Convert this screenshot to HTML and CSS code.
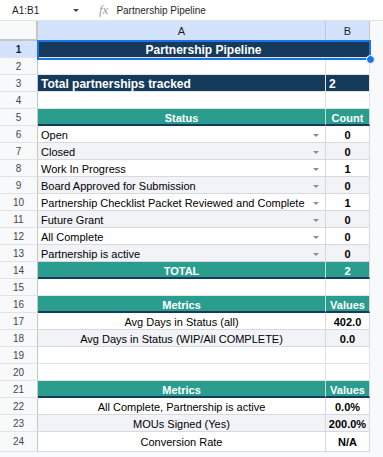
FILE: index.html
```html
<!DOCTYPE html>
<html lang="en">
<head>
    <meta charset="UTF-8">
    <title>Partnership Pipeline</title>
    <link rel="stylesheet" href="styles.css">
</head>
<body>
    <div class="topbar">
        <span class="namebox">A1:B1</span>
        <span class="caret"></span>
        <span class="fx">fx</span>
        <span class="formula">Partnership Pipeline</span>
    </div>

    <div class="sheet">
        <div class="row colhead">
            <div class="corner"></div>
            <div class="ch">A</div>
            <div class="ch">B</div>
        </div>

        <div class="row">
            <div class="rh active">1</div>
            <div class="c title">Partnership Pipeline</div>
        </div>
        <div class="row">
            <div class="rh">2</div>
            <div class="c"></div><div class="c"></div>
        </div>
        <div class="row navy">
            <div class="rh">3</div>
            <div class="c">Total partnerships tracked</div>
            <div class="c">2</div>
        </div>
        <div class="row">
            <div class="rh">4</div>
            <div class="c"></div><div class="c"></div>
        </div>

        <!-- status table -->
        <div class="row head">
            <div class="rh">5</div>
            <div class="c">Status</div>
            <div class="c">Count</div>
        </div>
        <div class="row item">
            <div class="rh">6</div>
            <div class="c">Open<span class="dd"></span></div>
            <div class="c val">0</div>
        </div>
        <div class="row item alt">
            <div class="rh">7</div>
            <div class="c">Closed<span class="dd"></span></div>
            <div class="c val">0</div>
        </div>
        <div class="row item">
            <div class="rh">8</div>
            <div class="c">Work In Progress<span class="dd"></span></div>
            <div class="c val">1</div>
        </div>
        <div class="row item alt">
            <div class="rh">9</div>
            <div class="c">Board Approved for Submission<span class="dd"></span></div>
            <div class="c val">0</div>
        </div>
        <div class="row item">
            <div class="rh">10</div>
            <div class="c">Partnership Checklist Packet Reviewed and Complete<span class="dd"></span></div>
            <div class="c val">1</div>
        </div>
        <div class="row item alt">
            <div class="rh">11</div>
            <div class="c">Future Grant<span class="dd"></span></div>
            <div class="c val">0</div>
        </div>
        <div class="row item">
            <div class="rh">12</div>
            <div class="c">All Complete<span class="dd"></span></div>
            <div class="c val">0</div>
        </div>
        <div class="row item alt">
            <div class="rh">13</div>
            <div class="c">Partnership is active<span class="dd"></span></div>
            <div class="c val">0</div>
        </div>
        <div class="row head">
            <div class="rh">14</div>
            <div class="c">TOTAL</div>
            <div class="c">2</div>
        </div>
        <div class="row">
            <div class="rh">15</div>
            <div class="c"></div><div class="c"></div>
        </div>

        <!-- metrics 1 -->
        <div class="row head">
            <div class="rh">16</div>
            <div class="c">Metrics</div>
            <div class="c">Values</div>
        </div>
        <div class="row item metric">
            <div class="rh">17</div>
            <div class="c">Avg Days in Status (all)</div>
            <div class="c val">402.0</div>
        </div>
        <div class="row item metric alt">
            <div class="rh">18</div>
            <div class="c">Avg Days in Status (WIP/All COMPLETE)</div>
            <div class="c val">0.0</div>
        </div>
        <div class="row">
            <div class="rh">19</div>
            <div class="c"></div><div class="c"></div>
        </div>
        <div class="row">
            <div class="rh">20</div>
            <div class="c"></div><div class="c"></div>
        </div>

        <!-- metrics 2 -->
        <div class="row head">
            <div class="rh">21</div>
            <div class="c">Metrics</div>
            <div class="c">Values</div>
        </div>
        <div class="row item metric">
            <div class="rh">22</div>
            <div class="c">All Complete, Partnership is active</div>
            <div class="c val">0.0%</div>
        </div>
        <div class="row item metric alt">
            <div class="rh">23</div>
            <div class="c">MOUs Signed (Yes)</div>
            <div class="c val">200.0%</div>
        </div>
        <div class="row item metric last">
            <div class="rh">24</div>
            <div class="c">Conversion Rate</div>
            <div class="c val">N/A</div>
        </div>

        <div class="selection"><span class="handle"></span></div>
    </div>
</body>
</html>
```

FILE: styles.css
```css
:root {
    --navy: #163a5c;
    --teal: #2a9d8f;
    --alt: #f1f3f7;
    --grid: #e2e3e3;
    --table-line: #d6dae0;
    --header-bg: #f8f9fa;
    --selected: #d3e3fd;
    --blue: #1a73e8;
}

* {
    margin: 0;
    padding: 0;
    box-sizing: border-box;
}

body {
    font-family: "Liberation Sans", Arial, sans-serif;
    background: var(--header-bg);
    color: #000;
    width: 383px;
    height: 457px;
    overflow: hidden;
}

.topbar {
    height: 21px;
    background: #fff;
    border-bottom: 1px solid #e1e3e1;
    display: flex;
    align-items: center;
    font-size: 10px;
    color: #1f1f1f;
}

.namebox {
    margin-left: 12px;
    width: 61px;
}

.caret {
    width: 0;
    height: 0;
    border-left: 3px solid transparent;
    border-right: 3px solid transparent;
    border-top: 3px solid #444746;
}

.fx {
    margin-left: 20px;
    font-family: "Liberation Serif", serif;
    font-style: italic;
    font-size: 13px;
    color: #9aa0a6;
}

.formula {
    margin-left: 8px;
}

.sheet {
    position: relative;
    width: 370px;
    background: #fff;
}

.row {
    display: grid;
    grid-template-columns: 38px 288px 44px;
    height: 17px;
}

.row.last {
    height: 20px;
}

.colhead {
    height: 20px;
}

.corner {
    background: var(--header-bg);
    border-right: 2px solid #c4c7c5;
    border-bottom: 2px solid #c4c7c5;
}

.ch {
    background: var(--selected);
    border-right: 1px solid #c4c7c5;
    border-bottom: 1px solid #c4c7c5;
    font-size: 11px;
    color: #1f1f1f;
    display: flex;
    align-items: center;
    justify-content: center;
}

.rh {
    background: var(--header-bg);
    border-right: 1px solid #c4c7c5;
    border-bottom: 1px solid var(--grid);
    font-size: 10px;
    color: #444746;
    display: flex;
    align-items: center;
    justify-content: center;
}

.rh.active {
    background: var(--selected);
    color: #0b1f44;
    font-weight: bold;
}

.c {
    border-right: 1px solid var(--grid);
    border-bottom: 1px solid var(--grid);
    font-size: 11px;
    padding: 2px 3px 0;
    display: flex;
    align-items: center;
    white-space: nowrap;
    overflow: hidden;
}

.title {
    grid-column: 2 / 4;
    background: var(--navy);
    color: #fff;
    font-size: 12px;
    font-weight: bold;
    justify-content: center;
}

.navy .c {
    background: var(--navy);
    color: #fff;
    font-size: 12px;
    font-weight: bold;
}

.navy .c:first-of-type {
    border-right-color: #d9dde3;
}

.head .c {
    background: var(--teal);
    color: #fff;
    font-weight: bold;
    justify-content: center;
    border-right-color: #c7ddd9;
    border-bottom: 2px solid var(--navy);
}

.item .c {
    border-right-color: var(--table-line);
    border-bottom-color: var(--table-line);
    justify-content: space-between;
}

.item.alt .c {
    background: var(--alt);
}

.item .val,
.metric .c {
    justify-content: center;
}

.val {
    font-weight: bold;
}

.last .c {
    align-items: flex-end;
    padding-bottom: 3px;
}

.dd {
    width: 0;
    height: 0;
    margin-right: 3px;
    border-left: 3px solid transparent;
    border-right: 3px solid transparent;
    border-top: 3px solid #8a8d91;
}

.selection {
    position: absolute;
    left: 37px;
    top: 19px;
    width: 334px;
    height: 20px;
    border: 2px solid var(--blue);
    pointer-events: none;
}

.handle {
    position: absolute;
    right: -6px;
    bottom: -6px;
    width: 9px;
    height: 9px;
    border-radius: 50%;
    background: var(--blue);
    border: 1px solid #fff;
}
```
